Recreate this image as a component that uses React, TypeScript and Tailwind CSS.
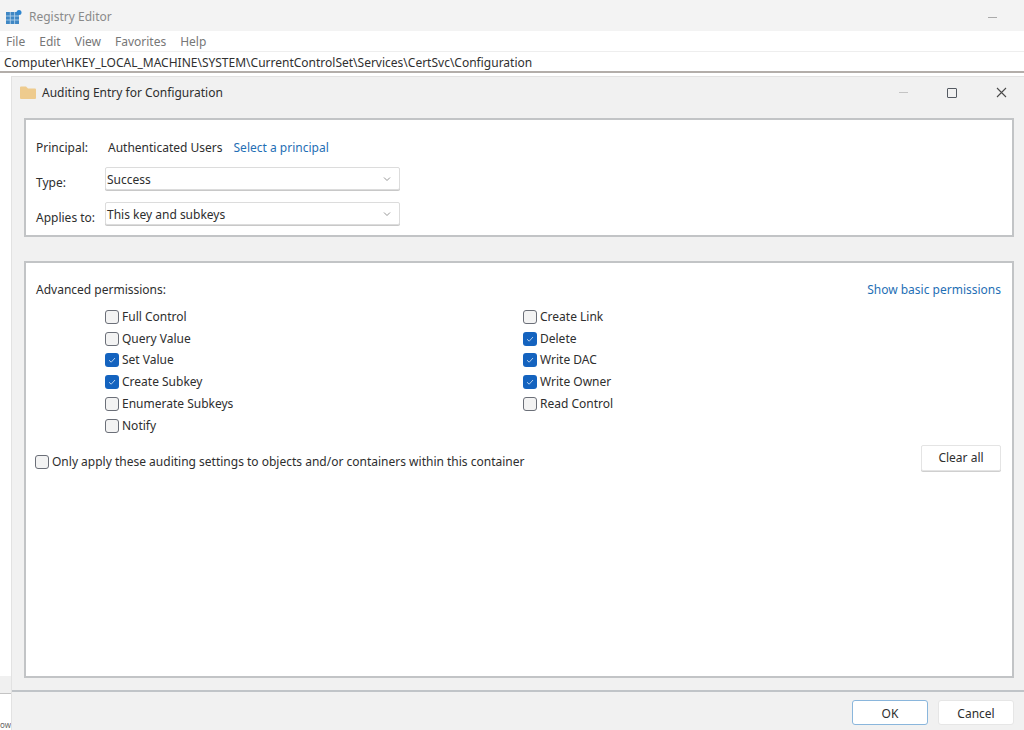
import React from "react";

function Check({ label, checked }: { label: string; checked?: boolean }) {
  return (
    <div className="flex h-[21.8px] items-center gap-[3px]">
      <span
        className={
          checked
            ? "flex h-[14px] w-[14px] items-center justify-center rounded-[3px] bg-[#1463bf]"
            : "h-[14px] w-[14px] rounded-[3px] border border-[#6b6f78] bg-[#f3f3f3]"
        }
      >
        {checked && (
          <svg width="10" height="10" viewBox="0 0 10 10" fill="none">
            <path d="M2 5.2 L4.2 7.2 L8 3" stroke="#b4cfee" strokeWidth="1" />
          </svg>
        )}
      </span>
      <span className="leading-none">{label}</span>
    </div>
  );
}

function Select({ value }: { value: string }) {
  return (
    <div className="flex h-[23px] w-[295px] items-center justify-between rounded-[2px] border border-[#dcdcdc] bg-white pl-[1px] pr-[8px] shadow-[0_1px_0_#c8c8c8]">
      <span className="pt-[2px]">{value}</span>
      <svg width="8" height="6" viewBox="0 0 8 6" fill="none">
        <path d="M1 1.5 L4 4.5 L7 1.5" stroke="#8a8a8a" strokeWidth="0.9" />
      </svg>
    </div>
  );
}

export default function App() {
  return (
    <div className="flex h-[730px] w-[1024px] flex-col overflow-hidden bg-white text-[12px] text-[#2e2e2e] [font-family:'Noto_Sans','Open_Sans',sans-serif]">
      <div className="flex h-[31px] shrink-0 items-center justify-between bg-[#f3f3f3] pl-[5px] pr-[27px] pt-[3px]">
        <div className="flex items-center gap-[7px] text-[#8a8a8a]">
          <svg width="17" height="17" viewBox="0 0 17 17">
            <rect x="1" y="3" width="13" height="12" fill="#3f87c4" />
            <path d="M1 7h13M1 11h13M5.3 3v12M9.6 3v12" stroke="#bcd8ee" strokeWidth="0.8" />
            <circle cx="14" cy="3.5" r="2.5" fill="#2f86cf" />
          </svg>
          <span>Registry Editor</span>
        </div>
        <div className="h-px w-[9px] bg-[#aaa]" />
      </div>
      <div className="flex h-[20px] shrink-0 items-center gap-[14px] bg-white pl-[6px] pt-[1px] text-[#777]">
        <span>File</span>
        <span>Edit</span>
        <span>View</span>
        <span>Favorites</span>
        <span>Help</span>
      </div>
      <div className="flex h-[22px] shrink-0 items-center border-t border-[#eeeeee] border-b-2 border-b-[#b3aeaa] bg-white pl-[4px] pt-[3px] text-[#303030]">
        Computer\HKEY_LOCAL_MACHINE\SYSTEM\CurrentControlSet\Services\CertSvc\Configuration
      </div>
      <div className="flex min-h-0 flex-1 pt-[3px]">
        <div className="flex w-[11px] shrink-0 flex-col justify-end">
          <div className="mb-[26px] h-[18px] border-b border-[#c4c4c4] bg-[#f0f0f0]" />
          <div className="text-[8px] leading-[10px] text-[#666]">ow</div>
        </div>
        <div className="flex min-w-0 flex-1 flex-col border-l border-t border-[#e2e2e2] bg-[#f1f1f1]">
          <div className="flex h-[41px] shrink-0 items-center justify-between pb-[10px] pl-[8px] pr-[17px]">
            <div className="flex items-center gap-[6px]">
              <svg width="16" height="14" viewBox="0 0 16 14">
                <path d="M0 1.5 Q0 0.5 1 0.5 H6 L8 2.5 H15 Q16 2.5 16 3.5 V12 Q16 13 15 13 H1 Q0 13 0 12 Z" fill="#eecb8e" />
              </svg>
              <span>Auditing Entry for Configuration</span>
            </div>
            <div className="flex items-center gap-[39px]">
              <div className="h-px w-[9px] bg-[#c4c4c4]" />
              <div className="h-[10px] w-[10px] rounded-[1px] border-[1.5px] border-[#555a62]" />
              <svg width="11" height="11" viewBox="0 0 11 11" fill="none">
                <path d="M1 1 L10 10 M10 1 L1 10" stroke="#4a4a4a" strokeWidth="1.1" />
              </svg>
            </div>
          </div>

          <div className="ml-[12px] mr-[10px] flex h-[119px] shrink-0 flex-col border-2 border-[#c2c4c6] bg-white pl-[10px]">
            <div className="flex h-[47px] shrink-0 items-center pt-[8px]">
              <span className="w-[72px]">Principal:</span>
              <span>Authenticated Users</span>
              <span className="ml-[11px] text-[#1f6fb5]">Select a principal</span>
            </div>
            <div className="flex h-[23px] shrink-0 items-center">
              <span className="mt-[9px] w-[69px]">Type:</span>
              <Select value="Success" />
            </div>
            <div className="mt-[12px] flex h-[23px] shrink-0 items-center">
              <span className="mt-[9px] w-[69px]">Applies to:</span>
              <Select value="This key and subkeys" />
            </div>
          </div>

          <div className="ml-[12px] mr-[10px] mt-[24px] flex h-[417px] shrink-0 flex-col border-2 border-[#c2c4c6] bg-white pl-[10px] pr-[11px]">
            <div className="flex h-[43px] shrink-0 items-center justify-between pt-[10px]">
              <span>Advanced permissions:</span>
              <span className="text-[#1f6fb5]">Show basic permissions</span>
            </div>
            <div className="flex pl-[69px]">
              <div className="w-[418px]">
                <Check label="Full Control" />
                <Check label="Query Value" />
                <Check label="Set Value" checked />
                <Check label="Create Subkey" checked />
                <Check label="Enumerate Subkeys" />
                <Check label="Notify" />
              </div>
              <div>
                <Check label="Create Link" />
                <Check label="Delete" checked />
                <Check label="Write DAC" checked />
                <Check label="Write Owner" checked />
                <Check label="Read Control" />
              </div>
            </div>
            <div className="mt-[8px] flex items-start justify-between">
              <div className="-ml-[1px] mt-[6px]">
                <Check label="Only apply these auditing settings to objects and/or containers within this container" />
              </div>
              <div className="flex h-[26px] w-[80px] items-center justify-center rounded-[2px] border border-[#e4e4e4] bg-white shadow-[0_1px_0_#cfcfcf]">
                Clear all
              </div>
            </div>
          </div>

          <div className="mt-[12px] h-[2px] shrink-0 bg-[#c0c4c8]" />
          <div className="flex flex-1 items-start justify-end gap-[10px] pr-[10px] pt-[8px]">
            <div className="flex h-[25px] w-[76px] items-center justify-center rounded-[3px] border-[1.5px] border-[#8ab6dc] bg-white pt-[2px]">
              OK
            </div>
            <div className="flex h-[25px] w-[76px] items-center justify-center rounded-[3px] border border-[#e6e6e6] bg-white pt-[2px]">
              Cancel
            </div>
          </div>
        </div>
      </div>
    </div>
  );
}
